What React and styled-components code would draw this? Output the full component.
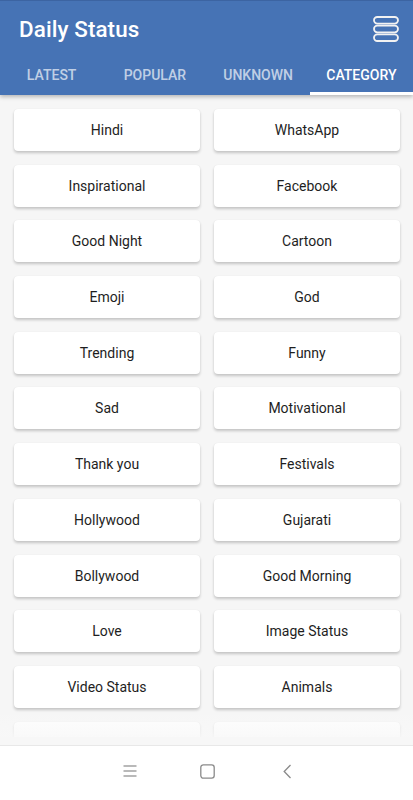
import React from 'react';
import styled, { createGlobalStyle } from 'styled-components';

const blue = '#4673B5';

const GlobalStyle = createGlobalStyle`
  html, body {
    margin: 0;
    padding: 0;
    background: #f6f6f6;
    font-family: Roboto, "Noto Sans", sans-serif;
  }
`;

const Screen = styled.div`
  width: 413px;
  height: 800px;
  display: flex;
  flex-direction: column;
  overflow: hidden;
  background: #f6f6f6;
`;

const Header = styled.header`
  background: ${blue};
  border-top: 1px solid #3c64a2;
  box-shadow: 0 2px 4px rgba(0, 0, 0, 0.25);
  position: relative;
  z-index: 2;
  flex-shrink: 0;
`;

const TitleRow = styled.div`
  height: 56px;
  display: flex;
  align-items: center;
  justify-content: space-between;
  padding: 0 14px 0 19px;
`;

const Title = styled.h1`
  margin: 0;
  color: #fff;
  font-size: 22.4px;
  font-weight: 500;
  letter-spacing: 0.1px;
`;

const MenuButton = styled.div`
  width: 26px;
  height: 26px;
  display: flex;
  align-items: center;
  justify-content: center;
`;

const Tabs = styled.nav`
  display: grid;
  grid-template-columns: repeat(4, 1fr);
  height: 38px;
`;

const Tab = styled.div`
  display: flex;
  align-items: center;
  justify-content: center;
  color: ${(p) => (p.active ? '#ffffff' : 'rgba(255, 255, 255, 0.68)')};
  font-size: 14px;
  font-weight: 500;
  box-shadow: ${(p) => (p.active ? 'inset 0 -3px 0 #ffffff' : 'none')};
  padding-bottom: 2px;
`;

const Content = styled.main`
  flex: 1;
  position: relative;
  overflow: hidden;
`;

const Grid = styled.div`
  display: grid;
  grid-template-columns: 186px 186px;
  column-gap: 14px;
  row-gap: 13.7px;
  padding: 14px 14px 0 14px;
`;

const Card = styled.div`
  height: 42px;
  background: #fff;
  border-radius: 4px;
  box-shadow: 0 2px 3px rgba(0, 0, 0, 0.2), 0 0 1px rgba(0, 0, 0, 0.08);
  display: flex;
  align-items: center;
  justify-content: center;
  font-size: 14px;
  color: #1e1e1e;
`;

const Fade = styled.div`
  position: absolute;
  left: 0;
  right: 0;
  bottom: 0;
  height: 22px;
  background: linear-gradient(rgba(248, 248, 248, 0.2), rgba(248, 248, 248, 0.85));
`;

const BottomBar = styled.footer`
  flex-shrink: 0;
  height: 63px;
  background: #fff;
  border-top: 8px solid #f7f7f7;
  box-sizing: border-box;
  display: flex;
  flex-direction: column;
`;

const BarLine = styled.div`
  height: 1px;
  background: #e8e8e8;
`;

const NavKeys = styled.div`
  flex: 1;
  display: grid;
  grid-template-columns: 77px 83px auto;
  align-items: center;
  justify-items: start;
  padding-left: 123px;
  padding-bottom: 4px;
`;

const categories = [
  'Hindi', 'WhatsApp',
  'Inspirational', 'Facebook',
  'Good Night', 'Cartoon',
  'Emoji', 'God',
  'Trending', 'Funny',
  'Sad', 'Motivational',
  'Thank you', 'Festivals',
  'Hollywood', 'Gujarati',
  'Bollywood', 'Good Morning',
  'Love', 'Image Status',
  'Video Status', 'Animals',
  'English', 'Love Shayari',
  'Attitude', 'Birthday',
];

const tabs = ['LATEST', 'POPULAR', 'UNKNOWN', 'CATEGORY'];

const StackIcon = () => (
  <svg width="26" height="26" viewBox="0 0 26 26" fill="none" stroke="#f2f2f2" strokeWidth="1.8">
    <rect x="1" y="1" width="24" height="6.6" rx="3.3" />
    <rect x="1" y="9.7" width="24" height="6.6" rx="3.3" />
    <rect x="1" y="18.4" width="24" height="6.6" rx="3.3" />
  </svg>
);

const App = () => (
  <>
    <GlobalStyle />
    <Screen>
      <Header>
        <TitleRow>
          <Title>Daily Status</Title>
          <MenuButton>
            <StackIcon />
          </MenuButton>
        </TitleRow>
        <Tabs>
          {tabs.map((t) => (
            <Tab key={t} active={t === 'CATEGORY'}>{t}</Tab>
          ))}
        </Tabs>
      </Header>
      <Content>
        <Grid>
          {categories.map((c) => (
            <Card key={c}>{c}</Card>
          ))}
        </Grid>
        <Fade />
      </Content>
      <BottomBar>
        <BarLine />
        <NavKeys>
          <svg width="14" height="12" viewBox="0 0 14 12" stroke="#8a8a8a" strokeWidth="1.2">
            <line x1="0.5" y1="1" x2="13.5" y2="1" />
            <line x1="0.5" y1="6" x2="13.5" y2="6" />
            <line x1="0.5" y1="11" x2="13.5" y2="11" />
          </svg>
          <svg width="15" height="15" viewBox="0 0 15 15" fill="none" stroke="#8a8a8a" strokeWidth="1.3">
            <rect x="0.8" y="0.8" width="13.4" height="13.4" rx="2.6" />
          </svg>
          <svg width="9" height="15" viewBox="0 0 9 15" fill="none" stroke="#8a8a8a" strokeWidth="1.3">
            <polyline points="7.5,1 1.2,7.5 7.5,14" />
          </svg>
        </NavKeys>
      </BottomBar>
    </Screen>
  </>
);

export default App;
